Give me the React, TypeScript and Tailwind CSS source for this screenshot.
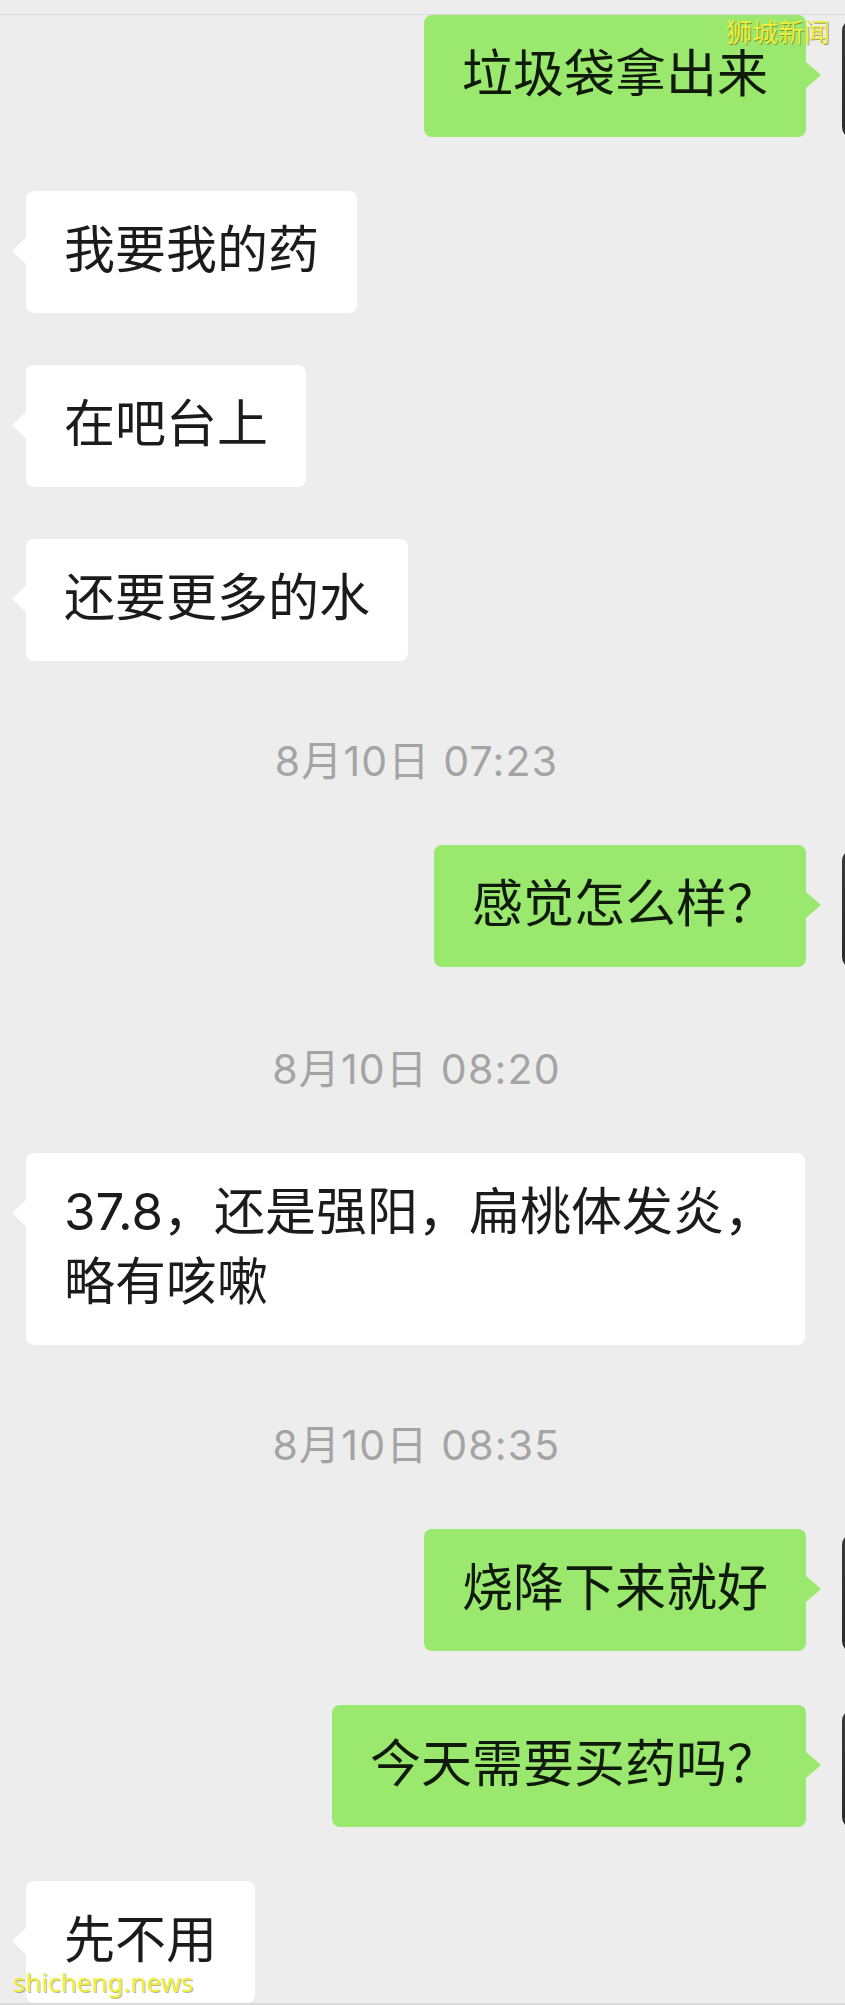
import React from "react";

type Side = "left" | "right";

type Item =
  | { kind: "msg"; side: Side; lines: string[] }
  | { kind: "time"; text: string };

const items: Item[] = [
  { kind: "msg", side: "right", lines: ["垃圾袋拿出来"] },
  { kind: "msg", side: "left", lines: ["我要我的药"] },
  { kind: "msg", side: "left", lines: ["在吧台上"] },
  { kind: "msg", side: "left", lines: ["还要更多的水"] },
  { kind: "time", text: "8月10日 07:23" },
  { kind: "msg", side: "right", lines: ["感觉怎么样？"] },
  { kind: "time", text: "8月10日 08:20" },
  { kind: "msg", side: "left", lines: ["37.8，还是强阳，扁桃体发炎，", "略有咳嗽"] },
  { kind: "time", text: "8月10日 08:35" },
  { kind: "msg", side: "right", lines: ["烧降下来就好"] },
  { kind: "msg", side: "right", lines: ["今天需要买药吗？"] },
  { kind: "msg", side: "left", lines: ["先不用"] },
];

// full-width question mark in the reference sits tighter than a full em
function Line({ text }: { text: string }) {
  if (text.endsWith("？")) {
    return (
      <div className="whitespace-nowrap">
        {text.slice(0, -1)}
        <span className="tracking-[-10px]">？</span>
      </div>
    );
  }
  return <div className="whitespace-nowrap">{text}</div>;
}

function Bubble({ side, lines }: { side: Side; lines: string[] }) {
  const mine = side === "right";
  return (
    <div
      className={
        mine
          ? "relative max-w-[779px] rounded-[8px] bg-[#9ae86e] px-[38px] pt-[24px] pb-[28px] text-[51px] leading-[70px] text-[#0f1a0a]"
          : "relative max-w-[779px] rounded-[8px] bg-white px-[38px] pt-[24px] pb-[28px] text-[51px] leading-[70px] text-[#1b1b1b]"
      }
    >
      {lines.map((l) => (
        <Line key={l} text={l} />
      ))}
      {mine ? (
        <span className="absolute right-[-15px] top-[47px] h-0 w-0 border-y-[13px] border-l-[15px] border-y-transparent border-l-[#9ae86e]" />
      ) : (
        <span className="absolute left-[-14px] top-[46px] h-0 w-0 border-y-[14px] border-r-[15px] border-y-transparent border-r-white" />
      )}
    </div>
  );
}

function Row({ side, lines, first }: { side: Side; lines: string[]; first: boolean }) {
  if (side === "right") {
    return (
      <div className={first ? "flex items-start justify-end gap-[36px]" : "mt-[52px] flex items-start justify-end gap-[36px]"}>
        <Bubble side={side} lines={lines} />
        <div className="mr-[-117px] mt-[4px] h-[120px] w-[120px] shrink-0 rounded-[12px] bg-gradient-to-br from-[#3a3a3a] to-[#1c1c1c]" />
      </div>
    );
  }
  return (
    <div className={first ? "flex items-start pl-[26px]" : "mt-[52px] flex items-start pl-[26px]"}>
      <Bubble side={side} lines={lines} />
    </div>
  );
}

export default function App() {
  return (
    <div className="relative flex h-[2005px] w-[845px] flex-col overflow-hidden bg-[#ededed] font-['Inter','Noto_Sans_CJK_SC',sans-serif]">
      <div className="h-[14px] shrink-0" />
      <div className="h-px shrink-0 bg-[#d9d9d9]" />

      {items.map((it, i) => {
        const prev = items[i - 1];
        if (it.kind === "time") {
          return (
            <div
              key={i}
              className="mt-[80px] flex h-[40px] justify-center pr-[12px] text-[41px] leading-[40px] tracking-[1.2px] text-[#a4a4a4]"
            >
              {it.text}
            </div>
          );
        }
        const afterTime = prev && prev.kind === "time";
        return afterTime ? (
          <div key={i} className="mt-[12px]">
            <Row side={it.side} lines={it.lines} first={false} />
          </div>
        ) : (
          <Row key={i} side={it.side} lines={it.lines} first={i === 0} />
        );
      })}

      <div className="mt-auto h-[3px] shrink-0 bg-[#dadada]" />

      <span className="absolute left-[726px] top-[14px] font-['Noto_Sans_CJK_SC',sans-serif] text-[26px] leading-[34px] text-[#f0ee3c] [text-shadow:1px_1px_0_rgba(90,90,0,0.55)]">
        狮城新闻
      </span>
      <span className="absolute left-[13px] top-[1964px] font-['Noto_Sans',sans-serif] text-[26px] leading-[36px] text-[#f0ee3c] [text-shadow:1px_1px_0_rgba(90,90,0,0.45)]">
        shicheng.news
      </span>
    </div>
  );
}
